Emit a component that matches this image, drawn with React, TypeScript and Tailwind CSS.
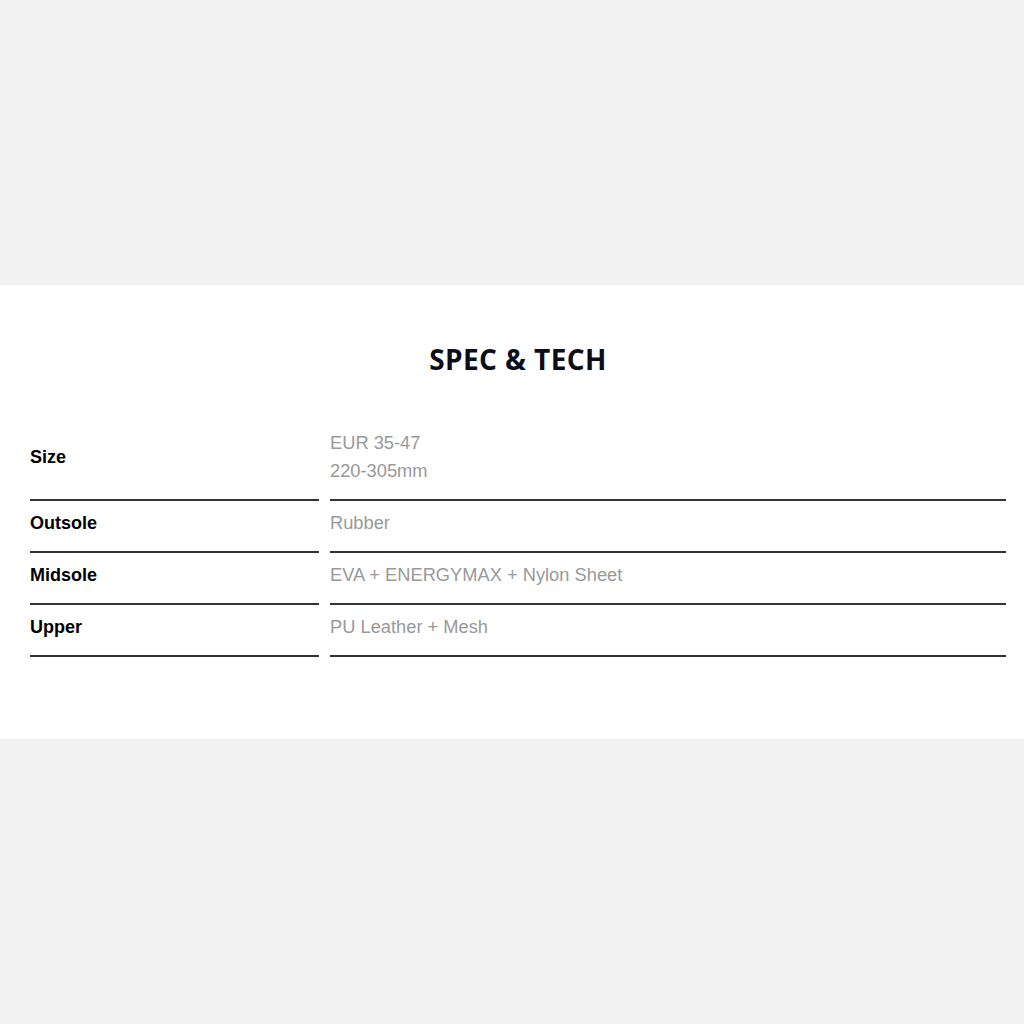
const specs = [
  { label: 'Size', values: ['EUR 35-47', '220-305mm'] },
  { label: 'Outsole', values: ['Rubber'] },
  { label: 'Midsole', values: ['EVA + ENERGYMAX + Nylon Sheet'] },
  { label: 'Upper', values: ['PU Leather + Mesh'] },
];

export default function App() {
  return (
    <div className="flex min-h-[1024px] flex-col bg-[#f1f1f1]">
      <div className="h-[285px] shrink-0" />
      <section className="bg-white pl-[30px] pr-[18px] pt-[56px] pb-[82px]">
        <h2 className="text-center font-['Open_Sans',sans-serif] text-[28px] font-bold leading-[36px] tracking-[0.4px] text-[#0d0d1a]">
          SPEC &amp; TECH
        </h2>
        <div className="mt-[44px] flex flex-col font-['Liberation_Sans',Arial,sans-serif] text-[18px]">
          {specs.map((row) => (
            <div key={row.label} className="flex gap-[11px]">
              <div className="flex w-[289px] shrink-0 items-center border-b-2 border-[#333] pt-[8px] pb-[14px] font-bold leading-[28px] text-black">
                {row.label}
              </div>
              <div className="flex flex-1 flex-col border-b-2 border-[#333] pt-[8px] pb-[14px] text-[18.3px] leading-[28px] text-[#999]">
                {row.values.map((v) => (
                  <span key={v}>{v}</span>
                ))}
              </div>
            </div>
          ))}
        </div>
      </section>
      <div className="flex-1" />
    </div>
  );
}
